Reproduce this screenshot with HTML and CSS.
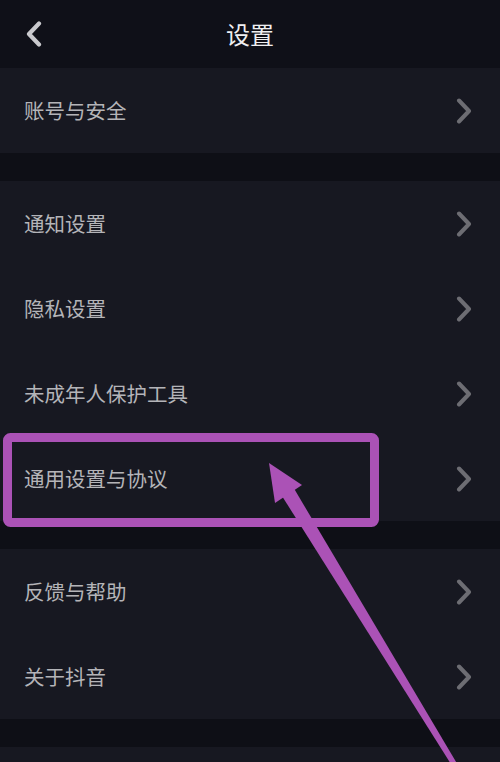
FILE: index.html
```html
<!DOCTYPE html>
<html lang="zh-CN">
<head>
<meta charset="utf-8">
<title>设置</title>
<link rel="stylesheet" href="styles.css">
</head>
<body>
<div class="page">
  <header class="topbar">
    <svg class="back" width="16" height="26" viewBox="0 0 16 26"><path d="M13 2.5 L3 13 L13 23.5" fill="none" stroke="#c9c9cd" stroke-width="4.2" stroke-linecap="round" stroke-linejoin="round"/></svg>
    <h1 class="title">设置</h1>
  </header>

  <section class="group">
    <div class="row"><span class="label">账号与安全</span><svg class="chev" width="16" height="26" viewBox="0 0 16 26"><path d="M3 2.5 L13 13 L3 23.5" fill="none" stroke="#6d6d73" stroke-width="4" stroke-linecap="round" stroke-linejoin="round"/></svg></div>
  </section>

  <section class="group">
    <div class="row"><span class="label">通知设置</span><svg class="chev" width="16" height="26" viewBox="0 0 16 26"><path d="M3 2.5 L13 13 L3 23.5" fill="none" stroke="#6d6d73" stroke-width="4" stroke-linecap="round" stroke-linejoin="round"/></svg></div>
    <div class="row"><span class="label">隐私设置</span><svg class="chev" width="16" height="26" viewBox="0 0 16 26"><path d="M3 2.5 L13 13 L3 23.5" fill="none" stroke="#6d6d73" stroke-width="4" stroke-linecap="round" stroke-linejoin="round"/></svg></div>
    <div class="row"><span class="label">未成年人保护工具</span><svg class="chev" width="16" height="26" viewBox="0 0 16 26"><path d="M3 2.5 L13 13 L3 23.5" fill="none" stroke="#6d6d73" stroke-width="4" stroke-linecap="round" stroke-linejoin="round"/></svg></div>
    <div class="row"><span class="label">通用设置与协议</span><svg class="chev" width="16" height="26" viewBox="0 0 16 26"><path d="M3 2.5 L13 13 L3 23.5" fill="none" stroke="#6d6d73" stroke-width="4" stroke-linecap="round" stroke-linejoin="round"/></svg></div>
  </section>

  <section class="group">
    <div class="row"><span class="label">反馈与帮助</span><svg class="chev" width="16" height="26" viewBox="0 0 16 26"><path d="M3 2.5 L13 13 L3 23.5" fill="none" stroke="#6d6d73" stroke-width="4" stroke-linecap="round" stroke-linejoin="round"/></svg></div>
    <div class="row"><span class="label">关于抖音</span><svg class="chev" width="16" height="26" viewBox="0 0 16 26"><path d="M3 2.5 L13 13 L3 23.5" fill="none" stroke="#6d6d73" stroke-width="4" stroke-linecap="round" stroke-linejoin="round"/></svg></div>
  </section>

  <section class="group">
    <div class="row"></div>
  </section>

  <svg class="annot" width="500" height="762" viewBox="0 0 500 762">
    <rect x="7.5" y="437.5" width="367" height="85" rx="3" ry="3" fill="none" stroke="#ab52b6" stroke-width="9"/>
    <polygon points="282,496 294,488.5 457,763.5 452.5,766.5" fill="#ab52b6"/>
    <polygon points="269,463 302,485 275,503" fill="#ab52b6"/>
  </svg>
</div>
</body>
</html>
```

FILE: styles.css
```css
html, body {
  margin: 0;
  padding: 0;
  background: #0e0f16;
}
body {
  font-family: "Noto Sans CJK SC", "Noto Sans", sans-serif;
  width: 500px;
  height: 762px;
  overflow: hidden;
}
.page {
  position: relative;
  width: 500px;
  height: 762px;
  overflow: hidden;
}
.topbar {
  height: 68px;
  background: #0f1018;
  display: flex;
  align-items: center;
  justify-content: center;
  position: relative;
}
.back {
  position: absolute;
  left: 26px;
  top: 21px;
}
.title {
  margin: 0;
  font-size: 24px;
  font-weight: 400;
  color: #efeff1;
  letter-spacing: 0;
  line-height: 1;
  margin-top: -1px;
}
.group {
  background: #171821;
  margin-bottom: 28px;
}
.row {
  height: 85px;
  display: flex;
  align-items: center;
  justify-content: space-between;
  padding: 0 28px 0 24px;
}
.label {
  font-size: 20.5px;
  color: #b4b4b8;
  line-height: 1;
}
.chev {
  display: block;
}
.annot {
  position: absolute;
  left: 0;
  top: 0;
  pointer-events: none;
}
```
